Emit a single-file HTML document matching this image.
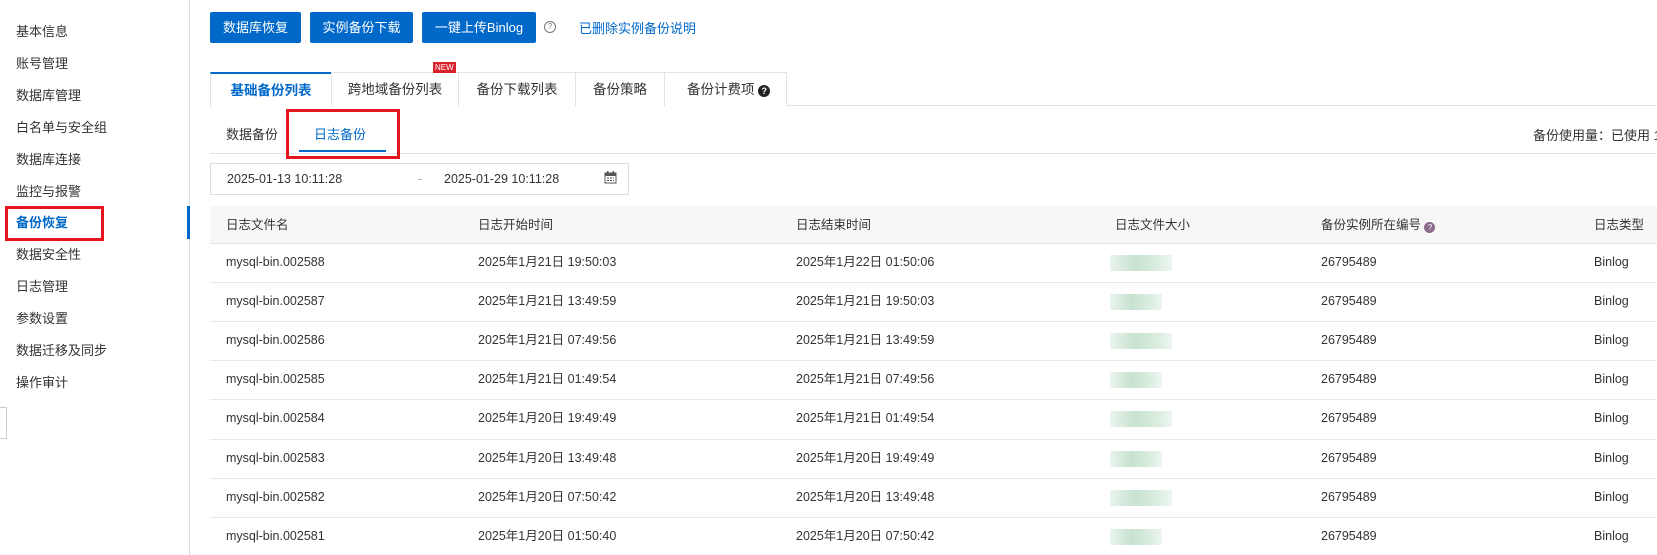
<!DOCTYPE html><html><head><meta charset="utf-8"><style>
body{margin:0;width:1657px;height:555px;overflow:hidden;background:#fff;font-family:"Liberation Sans","Noto Sans CJK SC",sans-serif;font-size:13px;color:#333;position:relative}
.a{position:absolute;white-space:nowrap;line-height:16px}
.side{left:0;top:0;width:189px;height:555px;border-right:1px solid #dcdcdc}
.si{position:absolute;left:16px;font-size:13px;color:#333;line-height:16px}
.btn{position:absolute;top:12px;height:31px;background:#0068c9;color:#fff;font-size:13px;line-height:31px;text-align:center;border-radius:2px}
.tab{position:absolute;top:72px;height:34px;border:1px solid #e3e3e3;border-bottom:none;line-height:34px;text-align:center;font-size:13.5px;box-sizing:border-box;background:#fff}
.hd{color:#555}
.cell{position:absolute;font-size:12.5px;color:#333;line-height:16px;white-space:nowrap}
.blur{position:absolute;height:16px;background:linear-gradient(90deg,#eaf4ee,#c8e2d0 40%,#d6ebdc 70%,#eef6f1)}
</style></head><body>
<div class="a side"></div>
<div class="si" style="top:24px">基本信息</div>
<div class="si" style="top:56px">账号管理</div>
<div class="si" style="top:88px">数据库管理</div>
<div class="si" style="top:120px">白名单与安全组</div>
<div class="si" style="top:152px">数据库连接</div>
<div class="si" style="top:184px">监控与报警</div>
<div class="si" style="top:215px;color:#0068c9;font-weight:bold">备份恢复</div>
<div class="si" style="top:247px">数据安全性</div>
<div class="si" style="top:279px">日志管理</div>
<div class="si" style="top:311px">参数设置</div>
<div class="si" style="top:343px">数据迁移及同步</div>
<div class="si" style="top:375px">操作审计</div>
<div class="a" style="left:5px;top:206px;width:93px;height:29px;border:3px solid #e5141f"></div>
<div class="a" style="left:187px;top:206px;width:3px;height:33px;background:#0068c9"></div>
<div class="a" style="left:0;top:407px;width:6px;height:30px;border:1px solid #ccc;border-left:none;background:#fff"></div>

<div class="btn" style="left:210px;width:91px">数据库恢复</div>
<div class="btn" style="left:310px;width:103px">实例备份下载</div>
<div class="btn" style="left:422px;width:114px">一键上传Binlog</div>
<div class="a" style="left:544px;top:21px;width:10px;height:10px;border:1px solid #777;border-radius:50%;font-size:8px;line-height:10px;text-align:center;color:#777">?</div>
<div class="a" style="left:579px;top:21px;color:#0068c9;font-size:13px">已删除实例备份说明</div>

<div class="a" style="left:210px;top:105px;width:1447px;height:1px;background:#e3e3e3"></div>
<div class="tab" style="left:210px;width:122px;border-top:2px solid #0068c9;color:#0068c9;font-weight:bold;height:35px">基础备份列表</div>
<div class="tab" style="left:331px;width:128px">跨地域备份列表</div>
<div class="a" style="left:433px;top:62px;background:#d9232c;color:#fff;font-size:8px;padding:0 2px;line-height:11px">NEW</div>
<div class="tab" style="left:458px;width:118px">备份下载列表</div>
<div class="tab" style="left:575px;width:90px">备份策略</div>
<div class="tab" style="left:664px;width:123px;text-align:left;padding-left:22px">备份计费项 <span style="display:inline-block;width:12px;height:12px;border-radius:50%;background:#222;color:#fff;font-size:9px;line-height:12px;text-align:center;font-weight:bold">?</span></div>

<div class="a" style="left:226px;top:127px">数据备份</div>
<div class="a" style="left:314px;top:127px;color:#0068c9">日志备份</div>
<div class="a" style="left:299px;top:150px;width:87px;height:2px;background:#0068c9"></div>
<div class="a" style="left:210px;top:153px;width:1447px;height:1px;background:#e3e3e3"></div>
<div class="a" style="left:286px;top:109px;width:108px;height:44px;border:3px solid #e5141f"></div>
<div class="a" style="left:1533px;top:128px">备份使用量：已使用 18</div>

<div class="a" style="left:210px;top:163px;width:417px;height:30px;border:1px solid #ddd"></div>
<div class="a" style="left:227px;top:171px;font-size:12.5px">2025-01-13 10:11:28</div>
<div class="a" style="left:418px;top:171px;color:#aaa">-</div>
<div class="a" style="left:444px;top:171px;font-size:12.5px">2025-01-29 10:11:28</div>
<svg class="a" style="left:604px;top:171px" width="13" height="13" viewBox="0 0 13 13"><rect x="1" y="2" width="11" height="10" fill="none" stroke="#555"/><rect x="1" y="2" width="11" height="3" fill="#555"/><rect x="3" y="0" width="1.5" height="3" fill="#555"/><rect x="8.5" y="0" width="1.5" height="3" fill="#555"/><path d="M3 7h2M6 7h2M9 7h1M3 9.5h2M6 9.5h2M9 9.5h1" stroke="#555"/></svg>

<div class="a" style="left:210px;top:206px;width:1447px;height:37px;background:#f7f7f7;border-bottom:1px solid #e3e3e3"></div>
<div class="cell hd" style="left:226px;top:217px">日志文件名</div>
<div class="cell hd" style="left:478px;top:217px">日志开始时间</div>
<div class="cell hd" style="left:796px;top:217px">日志结束时间</div>
<div class="cell hd" style="left:1115px;top:217px">日志文件大小</div>
<div class="cell hd" style="left:1321px;top:217px">备份实例所在编号 <span style="display:inline-block;width:11px;height:11px;border-radius:50%;background:#8a6a8a;color:#fff;font-size:8px;line-height:11px;text-align:center;vertical-align:-1px">?</span></div>
<div class="cell hd" style="left:1594px;top:217px">日志类型</div>
<div id="rows"></div>
<script>
var d=[["002588","21日 19:50:03","22日 01:50:06"],["002587","21日 13:49:59","21日 19:50:03"],["002586","21日 07:49:56","21日 13:49:59"],["002585","21日 01:49:54","21日 07:49:56"],["002584","20日 19:49:49","21日 01:49:54"],["002583","20日 13:49:48","20日 19:49:49"],["002582","20日 07:50:42","20日 13:49:48"],["002581","20日 01:50:40","20日 07:50:42"]];
var h="";d.forEach(function(r,i){var y=254+i*39.1;var b=243+(i+1)*39.1;
h+='<div class="cell" style="left:226px;top:'+y+'px">mysql-bin.'+r[0]+'</div><div class="cell" style="left:478px;top:'+y+'px">2025年1月'+r[1]+'</div><div class="cell" style="left:796px;top:'+y+'px">2025年1月'+r[2]+'</div><div class="blur" style="left:1110px;top:'+(y+1)+'px;width:'+(i%2?52:62)+'px"></div><div class="cell" style="left:1321px;top:'+y+'px">26795489</div><div class="cell" style="left:1594px;top:'+y+'px">Binlog</div>';
if(i<7)h+='<div class="a" style="left:210px;top:'+b+'px;width:1447px;height:1px;background:#e8e8e8"></div>';});
document.getElementById("rows").innerHTML=h;
</script>
</body></html>
